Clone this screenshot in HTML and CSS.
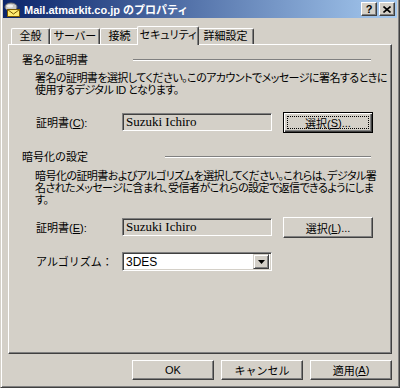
FILE: index.html
```html
<!DOCTYPE html>
<html lang="ja">
<head>
  <meta charset="UTF-8" />
  <title>Mail.atmarkit.co.jp のプロパティ</title>
  <link rel="stylesheet" href="styles.css">
</head>
<body>
  <div class="window">
    <div class="titlebar">
      <svg class="app-icon" width="16" height="16" viewBox="0 0 16 16">
        <ellipse cx="7" cy="6" rx="6" ry="4" fill="#c8c8c8" stroke="#707070"/>
        <ellipse cx="6" cy="5" rx="3" ry="1.5" fill="#f0f0f0"/>
        <rect x="3.5" y="8.5" width="12" height="7" fill="#ffec70" stroke="#7a5a00"/>
        <polyline points="3.5,8.5 9.5,13 15.5,8.5" fill="none" stroke="#7a5a00"/>
      </svg>
      <span class="title">Mail.atmarkit.co.jp のプロパティ</span>
      <div class="title-btns">
        <span class="tbtn help">?</span>
        <span class="tbtn close">
          <svg width="8" height="7" viewBox="0 0 8 7"><path d="M0.5 0.5L7.5 6.5M7.5 0.5L0.5 6.5" stroke="#000" stroke-width="1.6"/></svg>
        </span>
      </div>
    </div>

    <div class="dialog">
      <div class="tabs">
        <div class="tab w-general">全般</div>
        <div class="tab w-server">サーバー</div>
        <div class="tab w-conn">接続</div>
        <div class="tab active w-sec">セキュリティ</div>
        <div class="tab w-adv">詳細設定</div>
      </div>

      <div class="panel">
        <div class="group-head">
          <span class="group-title sign">署名の証明書</span>
          <span class="rule"></span>
        </div>
        <p class="desc">署名の証明書を選択してください。このアカウントでメッセージに署名するときに<br>使用するデジタル ID となります。</p>
        <div class="row row-sign">
          <label class="lbl">証明書(<u>C</u>):</label>
          <div class="field">Suzuki Ichiro</div>
          <button class="btn pick default"><span class="focus">選択(<u>S</u>)...</span></button>
        </div>

        <div class="group-head enc-head">
          <span class="group-title enc">暗号化の設定</span>
          <span class="rule"></span>
        </div>
        <p class="desc desc-enc">暗号化の証明書およびアルゴリズムを選択してください。これらは、デジタル署<br>名されたメッセージに含まれ、受信者がこれらの設定で返信できるようにしま<br>す。</p>
        <div class="row row-enc">
          <label class="lbl">証明書(<u>E</u>):</label>
          <div class="field">Suzuki Ichiro</div>
          <button class="btn pick"><span class="focus none">選択(<u>L</u>)...</span></button>
        </div>
        <div class="row row-algo">
          <label class="lbl">アルゴリズム：</label>
          <div class="combo">
            <span class="combo-text">3DES</span>
            <span class="combo-arrow">
              <svg width="7" height="4" viewBox="0 0 7 4"><path d="M0 0h7L3.5 4z" fill="#000"/></svg>
            </span>
          </div>
        </div>
      </div>

      <div class="actions">
        <button class="btn act">OK</button>
        <button class="btn act">キャンセル</button>
        <button class="btn act">適用(<u>A</u>)</button>
      </div>
    </div>
  </div>
</body>
</html>
```

FILE: styles.css
```css
* {
  box-sizing: border-box;
}
body {
  margin: 0;
  background: #d4d0c8;
  font-family: "Liberation Sans", "Noto Sans CJK JP", sans-serif;
  font-size: 11px;
  color: #000;
}
u {
  text-decoration: underline;
  text-underline-offset: 1px;
}

/* window frame */
.window {
  width: 400px;
  height: 388px;
  display: flex;
  flex-direction: column;
  border-left: 1px solid #d4d0c8;
  border-right: 1px solid #404040;
  border-bottom: 1px solid #404040;
  box-shadow: inset 1px 0 #fff, inset -1px -1px #808080;
  padding: 0 2px 2px;
}
.titlebar {
  height: 18px;
  display: flex;
  align-items: center;
  background: linear-gradient(90deg, #0a246a, #a6caf0);
  color: #fff;
  padding: 0 2px 0 1px;
}
.app-icon {
  flex: none;
}
.title {
  margin-left: 4px;
  font-weight: bold;
  font-size: 11px;
  white-space: nowrap;
  flex: 1;
}
.title-btns {
  display: flex;
  gap: 2px;
}
.tbtn {
  width: 16px;
  height: 14px;
  background: #d4d0c8;
  color: #000;
  display: flex;
  align-items: center;
  justify-content: center;
  border: 1px solid;
  border-color: #fff #404040 #404040 #fff;
  box-shadow: inset -1px -1px #808080;
  font-weight: bold;
  font-size: 11px;
  line-height: 1;
}

.dialog {
  flex: 1;
  display: flex;
  flex-direction: column;
  padding: 8px 5px 0;
}

/* tabs */
.tabs {
  height: 18px;
  display: flex;
  align-items: flex-end;
  padding-left: 3px;
}
.tab {
  position: relative;
  height: 16px;
  line-height: 14px;
  text-align: center;
  white-space: nowrap;
  background: #d4d0c8;
  border-top: 1px solid #fff;
  border-left: 1px solid #fff;
  border-right: 1px solid #404040;
  box-shadow: inset -1px 0 #808080;
  border-radius: 2px 2px 0 0;
  font-feature-settings: "palt";
}
.tab.active {
  z-index: 1;
  height: 19px;
  line-height: 17px;
  margin: 0 -2px -1px;
}
.w-general { width: 39px; }
.w-server { width: 50px; }
.w-conn { width: 39px; }
.w-sec { width: 62px; }
.w-adv { width: 57px; }

/* page */
.panel {
  height: 310px;
  border-top: 1px solid #fff;
  border-left: 1px solid #fff;
  border-right: 1px solid #404040;
  border-bottom: 1px solid #404040;
  box-shadow: inset -1px -1px #808080;
  padding: 9px 18px 0 13px;
}
.group-head {
  display: flex;
  align-items: center;
  height: 12px;
  line-height: 12px;
}
.group-title {
  white-space: nowrap;
}
.group-title.sign { width: 111px; }
.group-title.enc { width: 143px; }
.rule {
  flex: 1;
  margin-right: 2px;
  border-top: 1px solid #808080;
  border-bottom: 1px solid #fff;
}
.enc-head {
  margin-top: 18px;
}
.desc {
  margin: 6px 0 0 13px;
  line-height: 12px;
  white-space: nowrap;
  letter-spacing: -0.55px;
  font-feature-settings: "palt";
}
.desc-enc {
  margin-top: 7px;
}

.row {
  display: flex;
  align-items: flex-start;
  height: 21px;
}
.row-sign { margin-top: 16px; }
.row-enc { margin-top: 11px; }
.row-algo { margin-top: 14px; height: 19px; }
.lbl {
  width: 86px;
  margin-left: 14px;
  margin-top: 5px;
  line-height: 12px;
  white-space: nowrap;
}
.row-algo .lbl {
  margin-top: 4px;
}
.field {
  width: 150px;
  height: 18px;
  margin-top: 1px;
  border: 1px solid;
  border-color: #808080 #fff #fff #808080;
  box-shadow: inset 1px 1px #404040, inset -1px -1px #d4d0c8;
  padding-left: 3px;
  font-family: "Liberation Serif", serif;
  font-size: 13px;
  line-height: 16px;
  white-space: nowrap;
}
.combo {
  width: 150px;
  height: 19px;
  display: flex;
  background: #fff;
  border: 1px solid;
  border-color: #808080 #fff #fff #808080;
  box-shadow: inset 1px 1px #404040, inset -1px -1px #d4d0c8;
  padding: 2px 2px 2px 3px;
}
.combo-text {
  flex: 1;
  line-height: 14px;
  font-size: 12px;
}
.combo-arrow {
  width: 16px;
  height: 15px;
  margin-top: -1px;
  display: flex;
  align-items: center;
  justify-content: center;
  background: #d4d0c8;
  border: 1px solid;
  border-color: #d4d0c8 #404040 #404040 #d4d0c8;
  box-shadow: inset 1px 1px #fff, inset -1px -1px #808080;
}

/* buttons */
.btn {
  height: 21px;
  padding: 0;
  background: #d4d0c8;
  border: 1px solid;
  border-color: #fff #404040 #404040 #fff;
  box-shadow: inset -1px -1px #808080;
  font-family: inherit;
  font-size: 11px;
  color: #000;
  display: flex;
  align-items: center;
  justify-content: center;
}
.pick {
  width: 90px;
  margin-left: 11px;
  padding: 3px;
}
.btn.default {
  border-color: #000;
  box-shadow: inset 1px 1px #fff, inset -1px -1px #404040, inset -2px -2px #808080;
}
.focus {
  flex: 1;
  align-self: stretch;
  display: flex;
  align-items: center;
  justify-content: center;
  border: 1px dotted #000;
}
.focus.none {
  border-color: transparent;
}
.actions {
  display: flex;
  justify-content: flex-end;
  gap: 7px;
  margin-top: 6px;
}
.act {
  width: 82px;
  height: 20px;
}
```
